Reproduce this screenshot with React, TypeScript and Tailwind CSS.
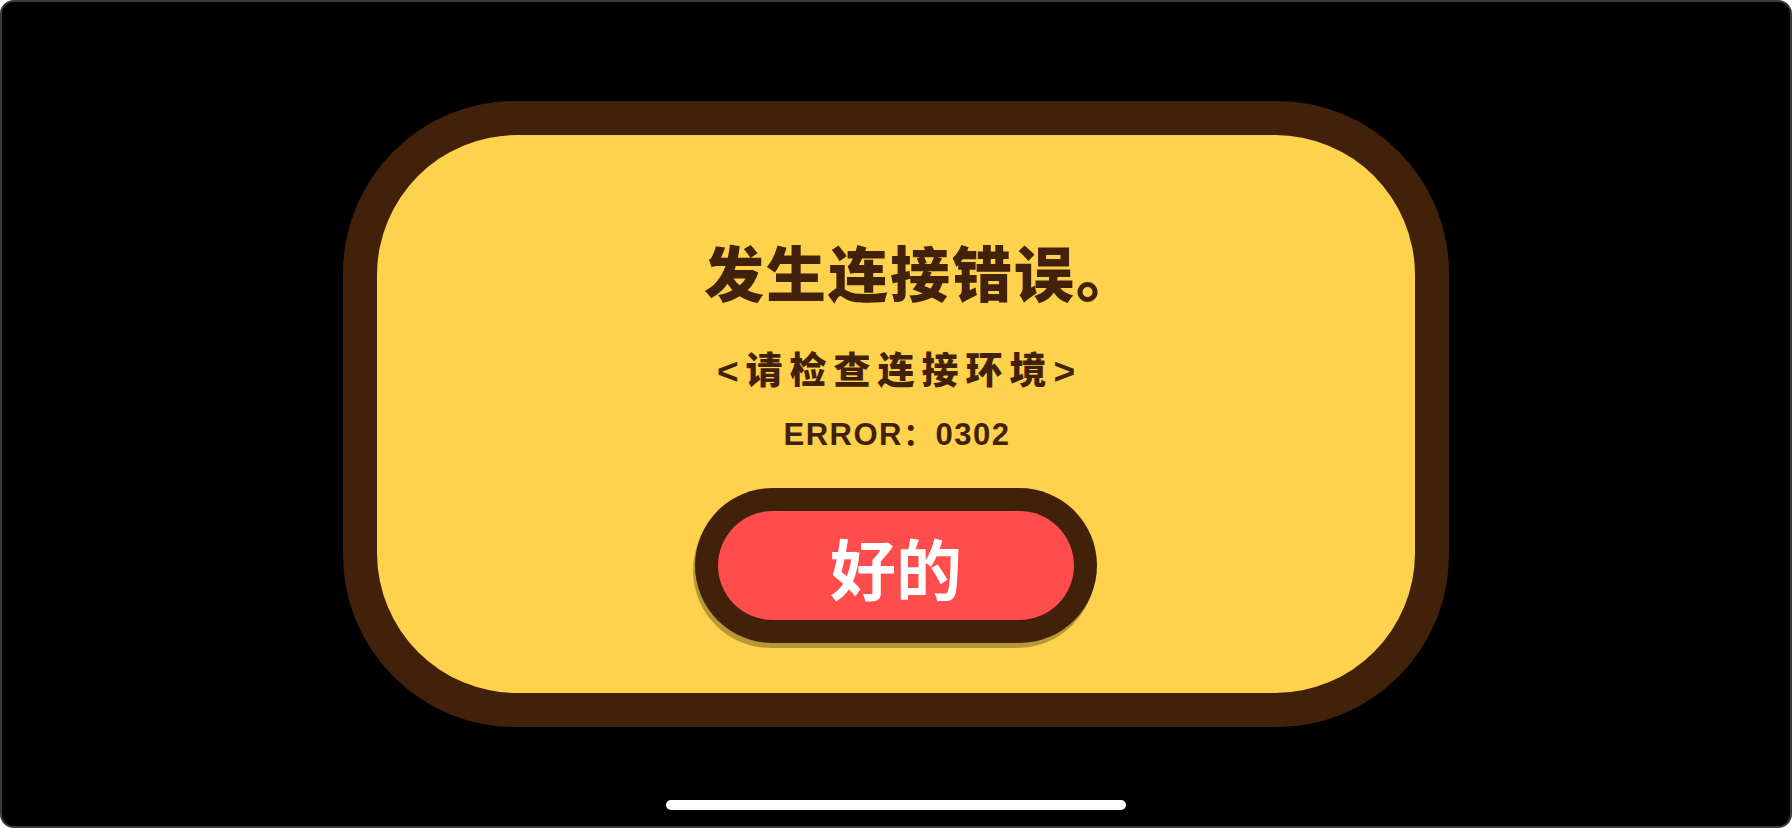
import React from 'react';

// connection error dialog, game style
export default function App() {
  return (
    <div className="w-[1792px] h-[828px] bg-white">
      <div className="relative w-full h-full bg-black border-2 border-[#3a3a3a] rounded-[14px] flex items-center justify-center overflow-hidden">
        {/* dialog */}
        <div className="w-[1106px] h-[626px] bg-[#42210b] rounded-[172px] p-[34px]">
          <div className="w-full h-full bg-[#ffd24d] rounded-[140px] flex flex-col items-center pt-[106px]">
            <h1
              className="ml-[50px] text-[60px] leading-none font-black text-[#42210b] tracking-[2px]"
              style={{ fontFamily: '"Noto Sans CJK SC", sans-serif' }}
            >
              发生连接错误。
            </h1>
            <p
              className="mt-[52px] pl-[7px] text-[37px] leading-none font-black text-[#42210b] tracking-[7px]"
              style={{ fontFamily: '"Liberation Sans", "Noto Sans CJK SC", sans-serif' }}
            >
              &lt;请检查连接环境&gt;
            </p>
            <p
              className="mt-[29px] pl-[2px] text-[31px] leading-none font-bold text-[#42210b] tracking-[1.5px]"
              style={{ fontFamily: '"Liberation Sans", "Noto Sans CJK SC", sans-serif' }}
            >
              ERROR：0302
            </p>
            <button className="mt-[38px] w-[402px] h-[155px] rounded-full bg-[#42210b] p-[23px] shadow-[-2px_5px_0_rgba(0,0,0,0.28)]">
              <span
                className="w-full h-full rounded-full bg-[#ff4d4d] flex items-center justify-center text-white text-[66px] leading-none font-bold"
                style={{ fontFamily: '"Noto Sans CJK SC", sans-serif' }}
              >
                好的
              </span>
            </button>
          </div>
        </div>
        {/* home indicator */}
        <div className="absolute bottom-[16px] left-1/2 -translate-x-1/2 w-[460px] h-[10px] rounded-full bg-white" />
      </div>
    </div>
  );
}
